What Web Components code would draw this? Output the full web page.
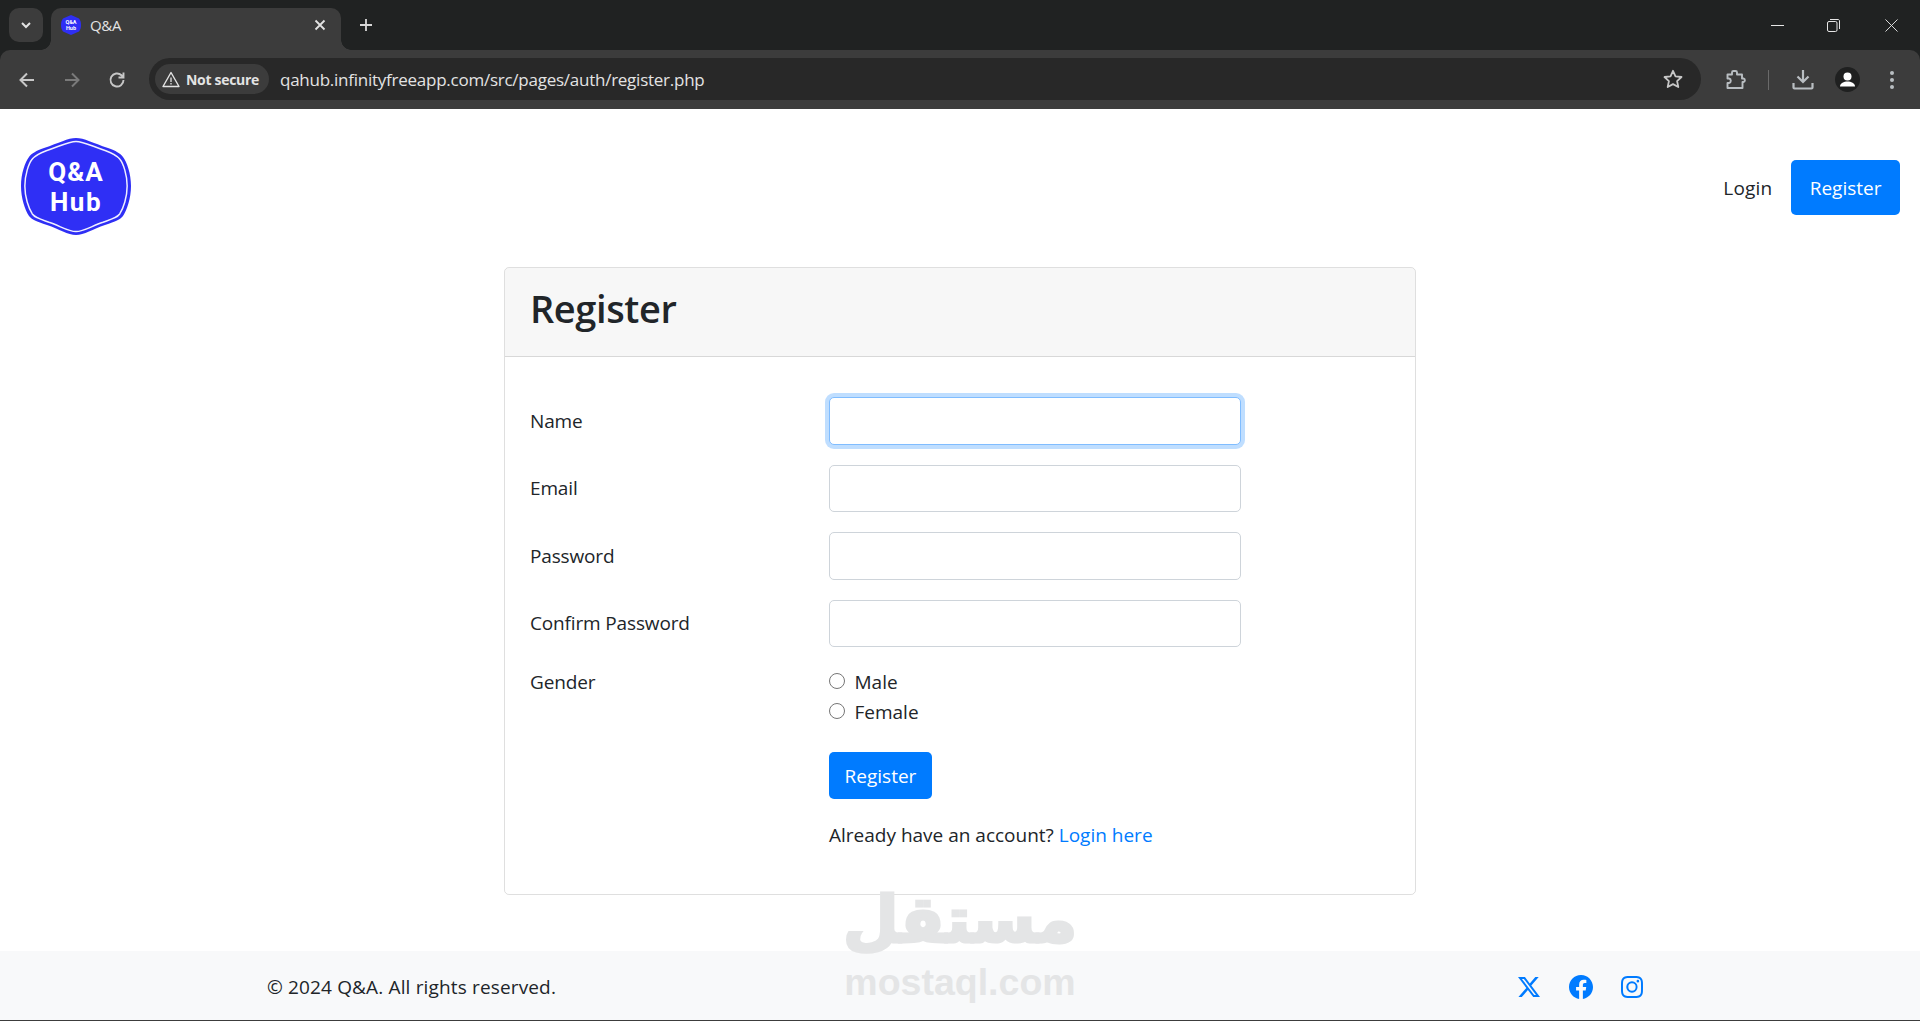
<!DOCTYPE html>
<html lang="en">
<head>
<meta charset="utf-8">
<title>Q&amp;A</title>
<style>
  html, body { margin: 0; height: 100%; background: #fff; }
  body { font-family: "Open Sans", "Noto Sans", sans-serif; font-size: 19px; color: #212529; overflow: hidden; }
  #app { display: flex; flex-direction: column; height: 1021px; position: relative; }
</style>
</head>
<body>
<div id="app">
  <browser-chrome></browser-chrome>
  <site-nav></site-nav>
  <register-card></register-card>
  <site-footer></site-footer>
  <water-mark></water-mark>
</div>

<script>
/**
 * <browser-chrome> — tab strip and toolbar above the page.
 */
const chromeTemplate = document.createElement('template');
chromeTemplate.innerHTML = `
  <style>
    :host { display: block; flex-shrink: 0; color: #e3e3e3; background: #202222; font-family: "Open Sans", sans-serif; }
    svg { display: block; }
    .strip {
      height: 50px;
      display: flex;
      align-items: flex-end;
      padding-left: 9px;
    }
    .tab-search {
      width: 34px;
      height: 34px;
      margin-bottom: 8px;
      background: #3c3c3c;
      border-radius: 10px;
      display: flex;
      align-items: center;
      justify-content: center;
    }
    .tab {
      width: 290px;
      height: 42px;
      margin-left: 8px;
      background: #3c3c3c;
      border-radius: 10px 10px 0 0;
      display: flex;
      align-items: center;
      padding: 0 15px 8px 10px;
      box-sizing: border-box;
      position: relative;
      font-size: 15px;
    }
    .tab::before, .tab::after {
      content: '';
      position: absolute;
      bottom: 0;
      width: 10px;
      height: 10px;
      background: radial-gradient(circle at 0 0, transparent 9.5px, #3c3c3c 10px);
    }
    .tab::before { left: -10px; }
    .tab::after { right: -10px; transform: scaleX(-1); }
    .tab-title { flex: 1; margin-left: 9px; letter-spacing: -0.3px; }
    .plus { margin: 0 0 18px 18px; }
    .win {
      margin-left: auto;
      display: flex;
      align-items: center;
      height: 50px;
      padding-right: 22px;
    }
    .win svg:nth-child(2) { margin-left: 43px; }
    .win svg:nth-child(3) { margin-left: 45px; }
    .bar {
      height: 59px;
      background: #3c3c3c;
      border-radius: 10px 10px 0 0;
      display: flex;
      align-items: center;
      padding-left: 17px;
      padding-right: 25px;
    }
    .nav-btn { margin-right: 25px; }
    .nav-btn:nth-child(3) { margin-right: 22px; }
    .omnibox {
      flex: 1;
      height: 42px;
      background: #282828;
      border-radius: 21px;
      display: flex;
      align-items: center;
      padding: 0 18px 0 6px;
      margin-bottom: 1px;
    }
    .chip {
      height: 30px;
      width: 114px;
      box-sizing: border-box;
      background: #3c3c3c;
      border-radius: 15px;
      display: flex;
      align-items: center;
      padding-left: 7px;
      gap: 6px;
      font-size: 14px;
      font-weight: 700;
      letter-spacing: -0.3px;
      white-space: nowrap;
    }
    .url { margin-left: 11px; font-size: 17px; flex: 1; white-space: nowrap; letter-spacing: -0.25px; }
    .tools { display: flex; align-items: center; margin-left: 25px; }
    .sep { width: 1px; height: 20px; background: #6a6a6a; margin: 0 23px 0 21px; }
    .avatar {
      width: 25px;
      height: 25px;
      border-radius: 50%;
      background: #1f2020;
      margin: 0 0 0 21px;
      overflow: hidden;
    }
    .dots { margin-left: 29px; }
  </style>
  <div class="strip">
    <div class="tab-search">
      <svg width="14" height="14" viewBox="0 0 14 14"><path d="M3 5l4 4 4-4" fill="none" stroke="#e3e3e3" stroke-width="2"/></svg>
    </div>
    <div class="tab">
      <svg width="20" height="20" viewBox="0 0 20 20"><path d="M10 0l8 3.500c1.500 2 2 4 2 6.500s-.5 4.500-2 6.500l-8 3.500-8-3.500c-1.500-2-2-4-2-6.500s.5-4.500 2-6.500z" fill="#2f2ff5"/><text x="10" y="9" font-size="5.500" font-weight="700" fill="#fff" text-anchor="middle" font-family="Roboto">Q&amp;A</text><text x="10" y="15" font-size="5.500" font-weight="700" fill="#fff" text-anchor="middle" font-family="Roboto">Hub</text></svg>
      <span class="tab-title">Q&amp;A</span>
      <svg width="12" height="12" viewBox="0 0 12 12"><path d="M1.500 1.500l9 9m0-9l-9 9" stroke="#e3e3e3" stroke-width="1.800"/></svg>
    </div>
    <svg class="plus" width="14" height="14" viewBox="0 0 14 14"><path d="M7 1v12M1 7h12" stroke="#d8d8d8" stroke-width="1.800"/></svg>
    <div class="win">
      <svg width="13" height="13" viewBox="0 0 13 13"><path d="M0 6.500h13" stroke="#e6e6e6" stroke-width="1"/></svg>
      <svg width="13" height="13" viewBox="0 0 13 13"><rect x=".5" y="2.500" width="9.500" height="10" rx="1.500" fill="none" stroke="#e6e6e6"/><path d="M3 .5h8c.9 0 1.500.6 1.500 1.500v8" fill="none" stroke="#e6e6e6"/></svg>
      <svg width="13" height="13" viewBox="0 0 14 14"><path d="M.5.5l13 13m0-13l-13 13" stroke="#e6e6e6" stroke-width="1"/></svg>
    </div>
  </div>
  <div class="bar">
    <svg class="nav-btn" width="20" height="20" viewBox="0 0 20 20"><path d="M17 10H4m6-6.500L3.500 10l6.500 6.500" fill="none" stroke="#c7c7c7" stroke-width="2"/></svg>
    <svg class="nav-btn" width="20" height="20" viewBox="0 0 20 20"><path d="M3 10h13m-6-6.500l6.500 6.500-6.500 6.500" fill="none" stroke="#7a7a7a" stroke-width="2"/></svg>
    <svg class="nav-btn" width="20" height="20" viewBox="0 0 20 20"><path d="M16.500 10a6.500 6.500 0 1 1-2-4.700L16.500 7.300M16.500 2.500v5h-5" fill="none" stroke="#c7c7c7" stroke-width="1.900"/></svg>
    <div class="omnibox">
      <div class="chip">
        <svg width="18" height="17" viewBox="0 0 18 17"><path d="M9 1.500L17 15.500H1z" fill="none" stroke="#e3e3e3" stroke-width="1.400" stroke-linejoin="round"/><path d="M9 6.500v4.500M9 12v1.500" stroke="#e3e3e3" stroke-width="1.300"/></svg>
        <span>Not secure</span>
      </div>
      <span class="url">qahub.infinityfreeapp.com/src/pages/auth/register.php</span>
      <svg class="star" width="20" height="20" viewBox="0 0 20 20"><path d="M10 1.800l2.500 5.500 6 .7-4.400 4.100 1.200 5.900L10 15.100l-5.300 2.900 1.200-5.900L1.500 8l6-.7z" fill="none" stroke="#c7c7c7" stroke-width="1.800" stroke-linejoin="round"/></svg>
    </div>
    <div class="tools">
      <svg width="21" height="21" viewBox="0 0 21 21"><path d="M1.500 5.500h4.500V3.500a1.500 1.500 0 0 1 1.500-1.500h2a1.500 1.500 0 0 1 1.500 1.500v2h5v4h1.500a1.800 1.800 0 0 1 0 3.500H16.500v6H1.500v-5h1.500a2.300 2.300 0 0 0 0-4.500H1.500z" fill="none" stroke="#b9bec2" stroke-width="1.900" stroke-linejoin="round"/></svg>
      <div class="sep"></div>
      <svg width="22" height="21" viewBox="0 0 22 21"><path d="M11 1v12m-5.500-5.500L11 13l5.500-5.500" fill="none" stroke="#b9bec2" stroke-width="2.200"/><path d="M1.500 14v4.500a1 1 0 0 0 1 1h17a1 1 0 0 0 1-1V14" fill="none" stroke="#b9bec2" stroke-width="2.200"/></svg>
      <div class="avatar">
        <svg width="25" height="25" viewBox="0 0 25 25"><circle cx="12.500" cy="9.500" r="4" fill="#fff"/><path d="M5 19.500c0-3.500 4-5 7.500-5s7.500 1.500 7.500 5z" fill="#fff"/></svg>
      </div>
      <svg class="dots" width="6" height="20" viewBox="0 0 6 20"><circle cx="3" cy="3" r="2" fill="#b9bec2"/><circle cx="3" cy="10" r="2" fill="#b9bec2"/><circle cx="3" cy="17" r="2" fill="#b9bec2"/></svg>
    </div>
  </div>
`;

class BrowserChrome extends HTMLElement {
  constructor() {
    super();
    this.attachShadow({ mode: 'open' });
    this.shadowRoot.appendChild(chromeTemplate.content.cloneNode(true));
  }
}

/**
 * <site-nav> — logo on the left, login and register on the right.
 */
const navTemplate = document.createElement('template');
navTemplate.innerHTML = `
  <style>
    :host {
      display: flex;
      flex-shrink: 0;
      align-items: center;
      justify-content: space-between;
      height: 158px;
      padding: 0 20px 0 20px;
      box-sizing: border-box;
    }
    .logo { display: block; margin-bottom: 3px; }
    .links { display: flex; align-items: center; gap: 19px; margin-top: -1px; }
    a { color: #212529; text-decoration: none; }
    .login { letter-spacing: 0.15px; padding-top: 1px; }
    .btn {
      background: #007bff;
      color: #fff;
      border-radius: 5px;
      padding: 12.500px 18.500px;
      line-height: 30px;
    }
  </style>
  <svg class="logo" width="112" height="99" viewBox="-1 -1 112 99">
    <path d="M55 0C63 0 72 5 87 10C95 13 99 15 102 19C106 24 110 36 110 48C110 60 106 72 102 78C99 82 95 83 84 87C72 91 63 97 55 97C47 97 38 91 26 87C15 83 11 82 8 78C4 72 0 60 0 48C0 36 4 24 8 19C11 15 15 13 23 10C38 5 47 0 55 0Z" fill="#2f2ff5"/>
    <path d="M55 0C63 0 72 5 87 10C95 13 99 15 102 19C106 24 110 36 110 48C110 60 106 72 102 78C99 82 95 83 84 87C72 91 63 97 55 97C47 97 38 91 26 87C15 83 11 82 8 78C4 72 0 60 0 48C0 36 4 24 8 19C11 15 15 13 23 10C38 5 47 0 55 0Z" fill="none" stroke="#f0f0ff" stroke-width="1.600" transform="translate(55 48.500) scale(.93) translate(-55 -48.500)"/>
    <text x="55" y="42.500" text-anchor="middle" font-family="Roboto" font-weight="700" font-size="26" letter-spacing="1" fill="#fff">Q&amp;A</text>
    <text x="55" y="73" text-anchor="middle" font-family="Roboto" font-weight="700" font-size="26" letter-spacing="1.500" fill="#fff">Hub</text>
  </svg>
  <div class="links">
    <a class="login" href="#">Login</a>
    <a class="btn" href="#">Register</a>
  </div>
`;

class SiteNav extends HTMLElement {
  constructor() {
    super();
    this.attachShadow({ mode: 'open' });
    this.shadowRoot.appendChild(navTemplate.content.cloneNode(true));
  }
}

/**
 * <form-row> — label column and field column of the register form.
 */
const rowTemplate = document.createElement('template');
rowTemplate.innerHTML = `
  <style>
    :host {
      display: grid;
      grid-template-columns: 299px 412px;
      margin-bottom: 20px;
    }
    .label { line-height: 30px; padding-top: var(--label-top, 8.750px); letter-spacing: -0.15px; }
  </style>
  <div class="label"><slot name="label"></slot></div>
  <div class="field"><slot></slot></div>
`;

class FormRow extends HTMLElement {
  constructor() {
    super();
    this.attachShadow({ mode: 'open' });
    this.shadowRoot.appendChild(rowTemplate.content.cloneNode(true));
  }
}

/**
 * <text-field> — bootstrap style text input, optionally shown focused.
 */
const fieldTemplate = document.createElement('template');
fieldTemplate.innerHTML = `
  <style>
    :host { display: block; }
    input {
      display: block;
      width: 100%;
      height: 47.500px;
      box-sizing: border-box;
      border: 1px solid #ced4da;
      border-radius: 5px;
      background: #fff;
      outline: none;
      padding: 0 15px;
    }
    :host([focused]) input {
      border-color: #80bdff;
      box-shadow: 0 0 0 4px rgba(0, 123, 255, .25);
    }
  </style>
  <input>
`;

class TextField extends HTMLElement {
  constructor() {
    super();
    this.attachShadow({ mode: 'open' });
    this.shadowRoot.appendChild(fieldTemplate.content.cloneNode(true));
    this.shadowRoot.querySelector('input').type = this.getAttribute('type') || 'text';
  }
}

/**
 * <radio-option> — radio button with a label.
 */
const radioTemplate = document.createElement('template');
radioTemplate.innerHTML = `
  <style>
    :host { display: flex; align-items: flex-start; height: 30px; line-height: 30px; letter-spacing: 0; }
    input { width: 16px; height: 16px; margin: 6px 9.500px 0 0; accent-color: #007bff; }
  </style>
  <input type="radio" name="gender">
  <span><slot></slot></span>
`;

class RadioOption extends HTMLElement {
  constructor() {
    super();
    this.attachShadow({ mode: 'open' });
    this.shadowRoot.appendChild(radioTemplate.content.cloneNode(true));
  }
}

/**
 * <register-card> — the card with header and form.
 */
const cardTemplate = document.createElement('template');
cardTemplate.innerHTML = `
  <style>
    :host {
      display: block;
      flex-shrink: 0;
      width: 912px;
      height: 628px;
      margin: 0 auto;
      box-sizing: border-box;
      border: 1px solid rgba(0, 0, 0, .125);
      border-radius: 5px;
    }
    header {
      height: 89px;
      box-sizing: border-box;
      padding: 16px 25px 0;
      background: rgba(0, 0, 0, .03);
      border-bottom: 1px solid rgba(0, 0, 0, .125);
      border-radius: 4px 4px 0 0;
    }
    h1 { margin: 0; font-size: 38px; font-weight: 600; line-height: 48px; letter-spacing: -0.4px; }
    .body { padding: 40px 25px 0; }
    .gender { --label-top: 0; margin-bottom: 25px; }
    .submit { margin-left: 299px; }
    button {
      display: block;
      height: 47px;
      width: 103px;
      padding: 0;
      border: 0;
      border-radius: 5px;
      background: #007bff;
      color: #fff;
      font: inherit;
    }
    p { margin: 21px 0 0 299px; line-height: 30px; }
    a { color: #007bff; text-decoration: none; }
  </style>
  <header><h1>Register</h1></header>
  <div class="body">
    <form-row><span slot="label">Name</span><text-field focused></text-field></form-row>
    <form-row><span slot="label">Email</span><text-field type="email"></text-field></form-row>
    <form-row><span slot="label">Password</span><text-field type="password"></text-field></form-row>
    <form-row><span slot="label">Confirm Password</span><text-field type="password"></text-field></form-row>
    <form-row class="gender">
      <span slot="label">Gender</span>
      <radio-option>Male</radio-option>
      <radio-option>Female</radio-option>
    </form-row>
    <div class="submit"><button type="button">Register</button></div>
    <p>Already have an account? <a href="#">Login here</a></p>
  </div>
`;

class RegisterCard extends HTMLElement {
  constructor() {
    super();
    this.attachShadow({ mode: 'open' });
    this.shadowRoot.appendChild(cardTemplate.content.cloneNode(true));
  }
}

/**
 * <site-footer> — copyright line and social icons.
 */
const footerTemplate = document.createElement('template');
footerTemplate.innerHTML = `
  <style>
    :host {
      display: flex;
      align-items: center;
      justify-content: space-between;
      margin-top: auto;
      height: 70px;
      box-sizing: border-box;
      padding: 2px 277px 0 267px;
      background: #f8f9fa;
      border-bottom: 1px solid #3c3c3c;
    }
    span { letter-spacing: 0.15px; }
    .social { display: flex; align-items: center; gap: 28.500px; color: #007bff; }
    svg { display: block; fill: currentColor; }
  </style>
  <span>© 2024 Q&amp;A. All rights reserved.</span>
  <div class="social">
    <svg width="22" height="22" viewBox="0 0 16 16"><path d="M12.600.75h2.454l-5.360 6.142L16 15.250h-4.937l-3.867-5.070-4.425 5.070H.316l5.733-6.570L0 .75h5.063l3.495 4.633L12.601.75Zm-.86 13.028h1.360L4.323 2.145H2.865z"/></svg>
    <svg width="24" height="24" viewBox="0 0 16 16"><path d="M16 8.049c0-4.446-3.582-8.050-8-8.050C3.580 0-.002 3.603-.002 8.050c0 4.017 2.926 7.347 6.750 7.951v-5.625h-2.030V8.050H6.750V6.275c0-2.017 1.195-3.131 3.022-3.131.876 0 1.791.157 1.791.157v1.980h-1.009c-.993 0-1.303.621-1.303 1.258v1.510h2.218l-.354 2.326H9.250V16c3.824-.604 6.750-3.934 6.750-7.951"/></svg>
    <svg width="22" height="22" viewBox="0 0 16 16"><path d="M8 0C5.829 0 5.556.01 4.703.048 3.850.088 3.269.222 2.760.42a3.900 3.900 0 0 0-1.417.923A3.900 3.900 0 0 0 .42 2.760C.222 3.268.087 3.850.048 4.700.01 5.555 0 5.827 0 8.001c0 2.172.01 2.444.048 3.297.04.852.174 1.433.372 1.942.205.526.478.972.923 1.417.444.445.89.719 1.416.923.51.198 1.090.333 1.942.372C5.555 15.990 5.827 16 8 16s2.444-.01 3.298-.048c.851-.04 1.434-.174 1.943-.372a3.900 3.900 0 0 0 1.416-.923c.445-.445.718-.891.923-1.417.197-.509.332-1.090.372-1.942C15.990 10.445 16 10.173 16 8s-.01-2.445-.048-3.299c-.04-.851-.175-1.433-.372-1.941a3.900 3.900 0 0 0-.923-1.417A3.900 3.900 0 0 0 13.240.42c-.51-.198-1.092-.333-1.943-.372C10.443.01 10.172 0 7.998 0zm-.717 1.442h.718c2.136 0 2.389.007 3.232.046.78.035 1.204.166 1.486.275.373.145.64.319.92.599s.453.546.598.92c.11.281.24.705.275 1.485.039.843.047 1.096.047 3.231s-.008 2.389-.047 3.232c-.035.78-.166 1.203-.275 1.485a2.500 2.500 0 0 1-.599.919c-.28.28-.546.453-.92.598-.28.11-.704.24-1.485.276-.843.038-1.096.047-3.232.047s-2.390-.009-3.233-.047c-.78-.036-1.203-.166-1.485-.276a2.500 2.500 0 0 1-.92-.598 2.500 2.500 0 0 1-.6-.92c-.109-.281-.24-.705-.275-1.485-.038-.843-.046-1.096-.046-3.233s.008-2.388.046-3.231c.036-.78.166-1.204.276-1.486.145-.373.319-.64.599-.92s.546-.453.92-.598c.282-.11.705-.24 1.485-.276.738-.034 1.024-.044 2.515-.045zm4.988 1.328a.96.96 0 1 0 0 1.920.96.96 0 0 0 0-1.920m-4.270 1.122a4.109 4.109 0 1 0 0 8.217 4.109 4.109 0 0 0 0-8.217m0 1.441a2.667 2.667 0 1 1 0 5.334 2.667 2.667 0 0 1 0-5.334"/></svg>
  </div>
`;

class SiteFooter extends HTMLElement {
  constructor() {
    super();
    this.attachShadow({ mode: 'open' });
    this.shadowRoot.appendChild(footerTemplate.content.cloneNode(true));
  }
}

/**
 * <water-mark> — grey stamp that lies over the card bottom and the footer.
 */
const markTemplate = document.createElement('template');
markTemplate.innerHTML = `
  <style>
    :host {
      position: absolute;
      left: 845px;
      top: 883px;
      width: 230px;
      display: flex;
      flex-direction: column;
      align-items: center;
      color: #e4e5e6;
      pointer-events: none;
    }
    .ar {
      font: 700 64px/75px "DejaVu Sans", sans-serif;
      direction: rtl;
      -webkit-text-stroke: 3px #e4e5e6;
    }
    .en { font: 700 37.500px/43px "Liberation Sans", sans-serif; margin-top: 3px; }
  </style>
  <span class="ar">مستقل</span>
  <span class="en">mostaql.com</span>
`;

class WaterMark extends HTMLElement {
  constructor() {
    super();
    this.attachShadow({ mode: 'open' });
    this.shadowRoot.appendChild(markTemplate.content.cloneNode(true));
  }
}

customElements.define('browser-chrome', BrowserChrome);
customElements.define('site-nav', SiteNav);
customElements.define('form-row', FormRow);
customElements.define('text-field', TextField);
customElements.define('radio-option', RadioOption);
customElements.define('register-card', RegisterCard);
customElements.define('site-footer', SiteFooter);
customElements.define('water-mark', WaterMark);
</script>
</body>
</html>
